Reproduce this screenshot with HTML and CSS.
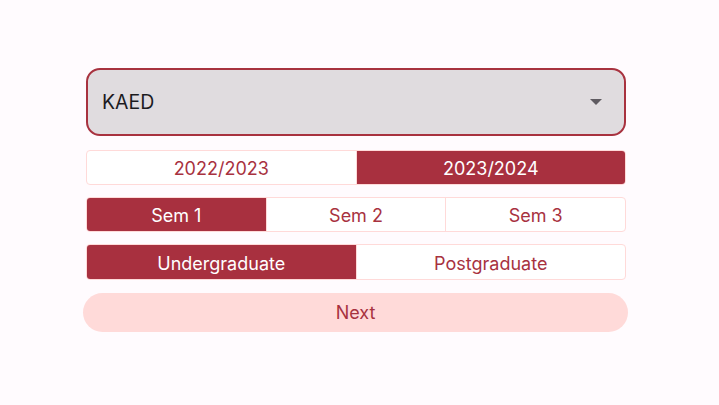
FILE: index.html
```html
<!DOCTYPE html>
<html>
<head>
<meta charset="utf-8">
<link rel="stylesheet" href="styles.css">
</head>
<body>
<div class="form">
  <div class="dropdown">
    <span class="dropdown-value">KAED</span>
    <svg class="dropdown-arrow" width="12" height="6" viewBox="0 0 12 6"><path d="M0 0 L12 0 L6 6 Z" fill="#5f5b61"/></svg>
  </div>
  <div class="segmented">
    <div class="seg">2022/2023</div>
    <div class="seg selected">2023/2024</div>
  </div>
  <div class="segmented">
    <div class="seg selected">Sem 1</div>
    <div class="seg">Sem 2</div>
    <div class="seg">Sem 3</div>
  </div>
  <div class="segmented tall">
    <div class="seg selected">Undergraduate</div>
    <div class="seg">Postgraduate</div>
  </div>
  <button class="next">Next</button>
</div>
</body>
</html>
```

FILE: styles.css
```css
html, body {
  margin: 0;
  padding: 0;
  background: #fffbfe;
  font-family: Inter, "Noto Sans", sans-serif;
}
.form {
  width: 540px;
  margin-left: 86px;
  padding-top: 68px;
  display: flex;
  flex-direction: column;
}
.dropdown {
  box-sizing: border-box;
  height: 68px;
  border: 2px solid #a8323f;
  border-radius: 14px;
  background: #e0dcdf;
  display: flex;
  align-items: center;
  justify-content: space-between;
  padding: 0 22px 0 14px;
}
.dropdown-value {
  font-size: 19.5px;
  color: #1c1b1f;
}
.dropdown-arrow {
  display: block;
}
.segmented {
  box-sizing: border-box;
  margin-top: 14px;
  height: 35px;
  border: 1px solid #ffdad9;
  border-radius: 4px;
  display: flex;
  overflow: hidden;
  background: #ffffff;
}
.segmented + .segmented {
  margin-top: 12px;
}
.segmented.tall {
  height: 36px;
}
.seg {
  flex: 1;
  display: flex;
  align-items: center;
  justify-content: center;
  padding-top: 2px;
  font-size: 18px;
  color: #a8323f;
  border-left: 1px solid #ffdad9;
}
.seg:first-child {
  border-left: none;
}
.seg.selected {
  background: #a8303f;
  color: #ffffff;
}
.next {
  margin: 13px -2px 0 -3px;
  height: 39px;
  border: none;
  border-radius: 20px;
  background: #ffdad9;
  color: #a8323f;
  font-family: Inter, "Noto Sans", sans-serif;
  font-size: 18px;
  padding: 0;
}
```
